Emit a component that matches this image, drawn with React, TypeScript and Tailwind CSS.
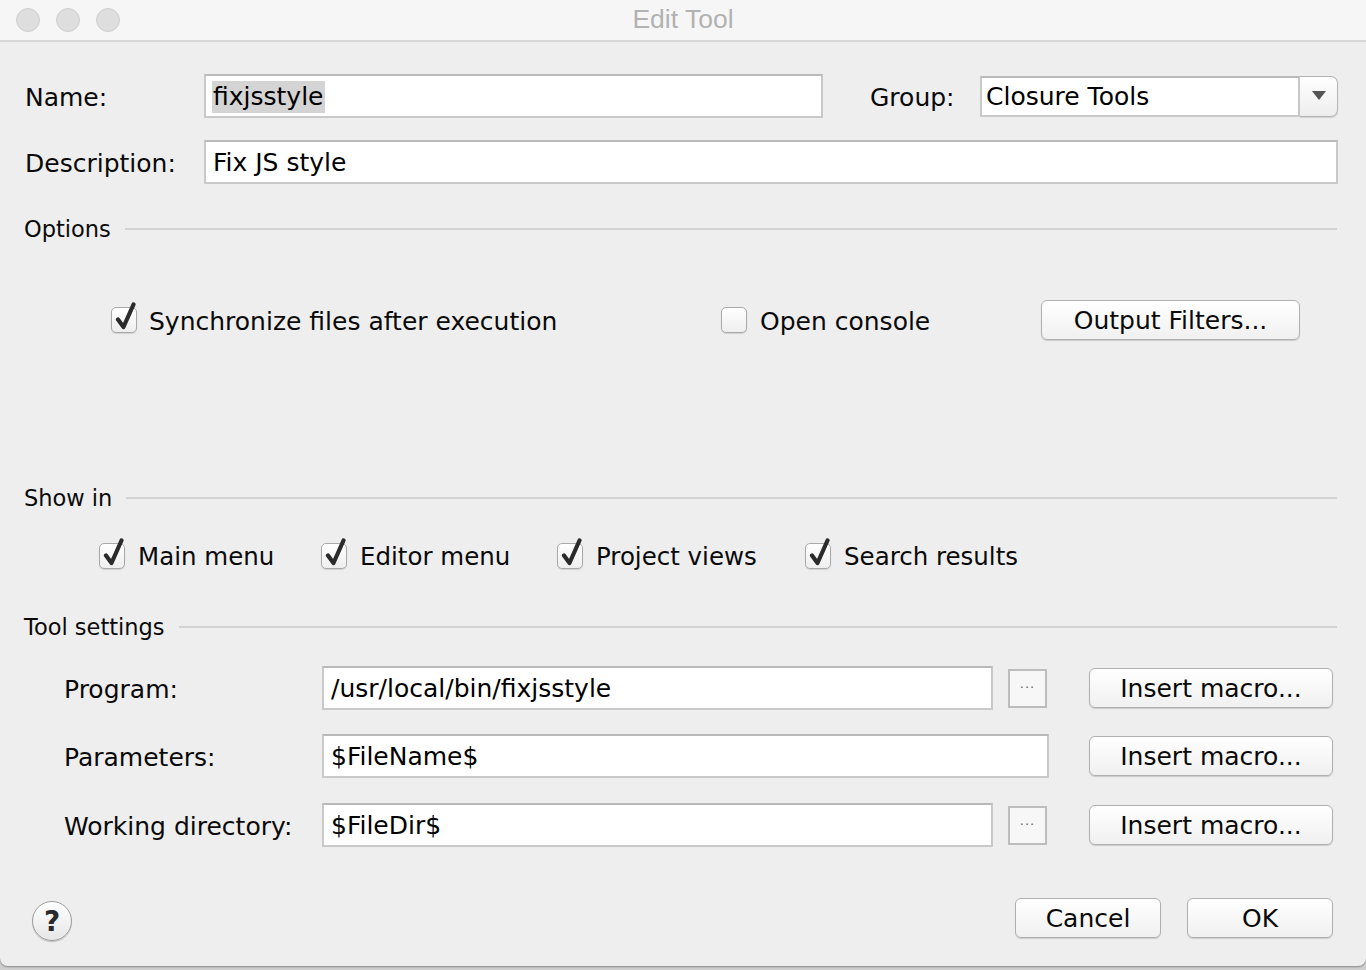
import React from "react";

const FONT = { fontFamily: '"DejaVu Sans", "Liberation Sans", sans-serif' };

function CheckBox({ checked }: { checked: boolean }) {
  return (
    <span className="relative inline-block w-[26px] h-[26px] shrink-0 rounded-[5px] border border-[#a9a9a9] bg-gradient-to-b from-white to-[#eeeeee] shadow-[0_1px_1px_rgba(0,0,0,0.12)]">
      {checked && (
        <svg
          className="absolute left-[1px] top-[-6px]"
          width="26"
          height="32"
          viewBox="0 0 26 32"
        >
          <path
            d="M5 17.5 L10.5 25 L20.5 2.5"
            fill="none"
            stroke="#2b2b2b"
            strokeWidth="4.2"
            strokeLinecap="round"
            strokeLinejoin="round"
          />
        </svg>
      )}
    </span>
  );
}

function PushButton({ label, w }: { label: string; w: string }) {
  return (
    <div
      className={`${w} h-[40px] shrink-0 flex items-center justify-center pt-[2px] rounded-[6px] border border-[#b0b0b0] bg-gradient-to-b from-white to-[#f0f0f0] shadow-[0_1px_1px_rgba(0,0,0,0.15)] text-[25px] text-[#0a0a0a]`}
    >
      {label}
    </div>
  );
}

function TextInput({ w, h = "h-[44px]", children }: { w: string; h?: string; children?: React.ReactNode }) {
  return (
    <div
      className={`${w} ${h} shrink-0 flex items-center pl-[7px] pt-[2px] bg-white border-2 border-[#c9c9c9] border-t-[#b9b9b9] text-[25px] text-black`}
    >
      {children}
    </div>
  );
}

function Header({ label }: { label: string }) {
  return (
    <div className="flex items-center h-[30px] pr-[1px]">
      <span className="text-[22.5px] text-[#0a0a0a] ml-[-1px] pt-[1px]">{label}</span>
      <div className="flex-1 h-[2px] bg-[#d2d2d2] ml-[14px] mt-[-1px]" />
    </div>
  );
}

function DotsButton() {
  return (
    <div className="w-[39px] h-[39px] shrink-0 flex items-center justify-center bg-[#f7f7f7] border-2 border-[#bdbdbd] text-[13px] text-[#666] tracking-[1px]">
      ···
    </div>
  );
}

function Label({ w, children, size = "text-[25px]" }: { w?: string; children: React.ReactNode; size?: string }) {
  return <span className={`${w ?? ""} ${size} text-[#0a0a0a] pt-[3px]`}>{children}</span>;
}

export default function App() {
  return (
    <div className="w-[1366px] h-[970px] bg-[#cfcfcf] overflow-hidden" style={FONT}>
      <div className="h-[966px] bg-[#eeeeee] rounded-b-[8px] flex flex-col shadow-[0_1px_2px_rgba(0,0,0,0.35)]">
        {/* Title bar */}
        <div className="relative h-[42px] bg-[#f6f6f6] border-b-2 border-[#d6d6d6] flex items-center">
          <div className="flex gap-[16px] pl-[16px]">
            <span className="w-[24px] h-[24px] rounded-full bg-[#dedede] border border-[#d0d0d0]" />
            <span className="w-[24px] h-[24px] rounded-full bg-[#dedede] border border-[#d0d0d0]" />
            <span className="w-[24px] h-[24px] rounded-full bg-[#dedede] border border-[#d0d0d0]" />
          </div>
          <div
            className="absolute inset-0 flex items-center justify-center text-[26.5px] text-[#b2b2b2]"
            style={{ fontFamily: '"Liberation Sans", Arial, sans-serif' }}
          >
            Edit Tool
          </div>
        </div>

        {/* Body */}
        <div className="flex flex-col pl-[25px] pr-[28px] pt-[32px]">
          {/* Name / Group */}
          <div className="flex items-center h-[44px]">
            <Label w="w-[179px]">Name:</Label>
            <TextInput w="w-[619px]">
              <span className="bg-[#d4d4d4] leading-[32px] pr-[2px] ml-[-1px] pl-[1px]">fixjsstyle</span>
            </TextInput>
            <Label w="ml-[47px] w-[110px]">Group:</Label>
            <div className="w-[320px] h-[41px] shrink-0 flex items-center pl-[4px] pt-[2px] bg-white border-2 border-[#c9c9c9] border-t-[#b9b9b9] text-[25px] text-black">
              Closure Tools
            </div>
            <div className="w-[38px] h-[41px] flex items-center justify-center rounded-r-[7px] border border-l-0 border-[#b4b4b4] bg-gradient-to-b from-white to-[#ededed] shadow-[0_1px_1px_rgba(0,0,0,0.12)]">
              <svg width="14" height="10" viewBox="0 0 14 10">
                <path d="M0 0 L14 0 L7 9 Z" fill="#555" />
              </svg>
            </div>
          </div>

          {/* Description */}
          <div className="flex items-center h-[44px] mt-[22px]">
            <Label w="w-[179px]">Description:</Label>
            <TextInput w="flex-1">Fix JS style</TextInput>
          </div>

          {/* Options */}
          <div className="mt-[30px]">
            <Header label="Options" />
          </div>
          <div className="flex items-center h-[40px] mt-[56px]">
            <div className="ml-[86px] w-[610px] flex items-center gap-[12px]">
              <CheckBox checked />
              <Label>Synchronize files after execution</Label>
            </div>
            <div className="w-[320px] flex items-center gap-[13px]">
              <CheckBox checked={false} />
              <Label>Open console</Label>
            </div>
            <PushButton label="Output Filters..." w="w-[259px]" />
          </div>

          {/* Show in */}
          <div className="mt-[143px]">
            <Header label="Show in" />
          </div>
          <div className="flex items-center h-[40px] mt-[23px] ml-[74px]">
            <div className="w-[222px] flex items-center gap-[13px]">
              <CheckBox checked />
              <Label size="text-[24.5px]">Main menu</Label>
            </div>
            <div className="w-[236px] flex items-center gap-[13px]">
              <CheckBox checked />
              <Label size="text-[24.5px]">Editor menu</Label>
            </div>
            <div className="w-[248px] flex items-center gap-[13px]">
              <CheckBox checked />
              <Label size="text-[24.5px]">Project views</Label>
            </div>
            <div className="flex items-center gap-[13px]">
              <CheckBox checked />
              <Label size="text-[24.5px]">Search results</Label>
            </div>
          </div>

          {/* Tool settings */}
          <div className="mt-[36px]">
            <Header label="Tool settings" />
          </div>

          <div className="flex items-center h-[44px] mt-[24px] ml-[39px]">
            <Label w="w-[258px]">Program:</Label>
            <TextInput w="w-[671px]">/usr/local/bin/fixjsstyle</TextInput>
            <div className="ml-[15px]">
              <DotsButton />
            </div>
            <div className="ml-[42px]">
              <PushButton label="Insert macro..." w="w-[244px]" />
            </div>
          </div>

          <div className="flex items-center h-[44px] mt-[24px] ml-[39px]">
            <Label w="w-[258px]">Parameters:</Label>
            <TextInput w="w-[727px]">$FileName$</TextInput>
            <div className="ml-[40px]">
              <PushButton label="Insert macro..." w="w-[244px]" />
            </div>
          </div>

          <div className="flex items-center h-[44px] mt-[25px] ml-[39px]">
            <Label w="w-[258px]">Working directory:</Label>
            <TextInput w="w-[671px]">$FileDir$</TextInput>
            <div className="ml-[15px]">
              <DotsButton />
            </div>
            <div className="ml-[42px]">
              <PushButton label="Insert macro..." w="w-[244px]" />
            </div>
          </div>

          {/* Bottom buttons */}
          <div className="flex items-start mt-[51px] pr-[5px]">
            <div className="ml-[7px] mt-[3px] w-[40px] h-[40px] rounded-full border border-[#9c9c9c] bg-gradient-to-b from-white to-[#e6e6e6] shadow-[0_1px_1px_rgba(0,0,0,0.2)] flex items-center justify-center pt-[2px] text-[28px] font-bold text-[#2a2a2a]">
              ?
            </div>
            <div className="flex-1" />
            <PushButton label="Cancel" w="w-[146px]" />
            <div className="ml-[26px]">
              <PushButton label="OK" w="w-[146px]" />
            </div>
          </div>
        </div>
      </div>
    </div>
  );
}
